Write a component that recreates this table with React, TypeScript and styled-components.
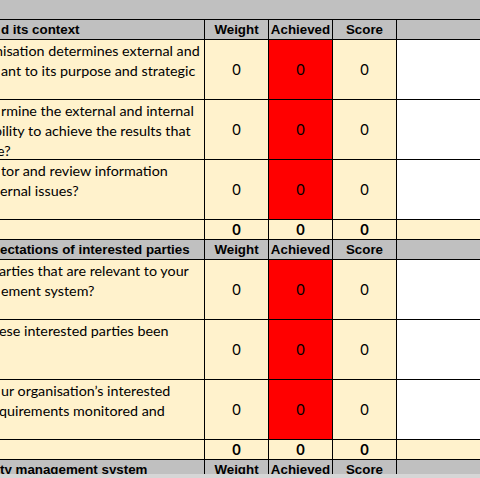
import React from "react";
import styled, { createGlobalStyle } from "styled-components";

const GlobalStyle = createGlobalStyle`
  html, body {
    margin: 0;
    padding: 0;
    background: #d6d6d6;
  }
  * { box-sizing: border-box; }
`;

const GRAY = "#c0c0c0";
const CREAM = "#fff2cc";
const RED = "#ff0000";

const Page = styled.div`
  width: 480px;
  height: 478px;
  overflow: hidden;
  display: flex;
  flex-direction: column;
  background: #d6d6d6;
`;

const Viewport = styled.div`
  height: 474px;
  overflow: hidden;
  background: #ffffff;
  flex: none;
`;

const TopBand = styled.div`
  height: 20px;
  background: ${GRAY};
  border-bottom: 1px solid #000;
`;

type Kind = "header" | "data" | "total";

const Row = styled.div<{ $kind: Kind }>`
  display: grid;
  grid-template-columns: 205px 64px 64px 64px 1fr;
  height: ${(p) => (p.$kind === "data" ? 60 : 20)}px;
  border-bottom: 1px solid #000;
`;

type Fill = "gray" | "cream" | "red" | "white";
const fillColor = (f: Fill) =>
  f === "gray" ? GRAY : f === "cream" ? CREAM : f === "red" ? RED : "#ffffff";

const Cell = styled.div<{ $fill: Fill; $last?: boolean }>`
  background: ${(p) => fillColor(p.$fill)};
  border-right: ${(p) => (p.$last ? "none" : "1px solid #000")};
  overflow: hidden;
  min-width: 0;
`;

const HeaderTitle = styled(Cell)`
  display: flex;
  align-items: center;
  padding-left: 1px;
  font-family: "Liberation Sans", Arial, sans-serif;
  font-weight: bold;
  font-size: 13.33px;
  color: #000;
  white-space: nowrap;
`;

const HeaderLabel = styled(Cell)`
  display: flex;
  align-items: center;
  justify-content: center;
  font-family: "Liberation Sans", Arial, sans-serif;
  font-weight: bold;
  font-size: 13.33px;
  color: #000;
  white-space: nowrap;
`;

const QuestionCell = styled(Cell)`
  display: flex;
  flex-direction: column;
  padding-top: 1px;
  font-family: Lato, "Open Sans", sans-serif;
  font-size: 14.3px;
  line-height: 20px;
  color: #000;
  white-space: nowrap;
`;

const Line = styled.span<{ $shift: number }>`
  display: block;
  margin-left: ${(p) => p.$shift}px;
`;

const NumCell = styled(Cell)<{ $bold?: boolean }>`
  display: flex;
  align-items: center;
  justify-content: center;
  font-family: Lato, "Open Sans", sans-serif;
  font-size: 14.67px;
  font-weight: ${(p) => (p.$bold ? 700 : 400)};
  color: #000;
`;

type Question = { lines: { text: string; shift: number }[] };
type Section = { title: string; titleShift: number; questions: Question[] };

const sections: Section[] = [
  {
    title: "d its context",
    titleShift: 0,
    questions: [
      {
        lines: [
          { text: "nisation determines external and", shift: -5 },
          { text: "ant to its purpose and strategic", shift: 1 },
        ],
      },
      {
        lines: [
          { text: "rmine the external and internal", shift: 1 },
          { text: "bility to achieve the results that", shift: -6 },
          { text: "e?", shift: -3 },
        ],
      },
      {
        lines: [
          { text: "tor and review information", shift: 1 },
          { text: "ernal issues?", shift: 0 },
        ],
      },
    ],
  },
  {
    title: "ectations of interested parties",
    titleShift: -1,
    questions: [
      {
        lines: [
          { text: "arties that are relevant to your", shift: -1 },
          { text: "ement system?", shift: 1 },
        ],
      },
      {
        lines: [{ text: "ese interested parties been", shift: -1 }],
      },
      {
        lines: [
          { text: "ur organisation\u2019s interested", shift: 1 },
          { text: "quirements monitored and", shift: -1 },
        ],
      },
    ],
  },
  {
    title: "ty management system",
    titleShift: -1,
    questions: [],
  },
];

function HeaderRow({ title, shift }: { title: string; shift: number }) {
  return (
    <Row $kind="header">
      <HeaderTitle $fill="gray">
        <Line $shift={shift}>{title}</Line>
      </HeaderTitle>
      <HeaderLabel $fill="gray">Weight</HeaderLabel>
      <HeaderLabel $fill="gray">Achieved</HeaderLabel>
      <HeaderLabel $fill="gray">Score</HeaderLabel>
      <Cell $fill="gray" $last />
    </Row>
  );
}

function QuestionRow({ q }: { q: Question }) {
  return (
    <Row $kind="data">
      <QuestionCell $fill="cream">
        {q.lines.map((l, i) => (
          <Line key={i} $shift={l.shift}>
            {l.text}
          </Line>
        ))}
      </QuestionCell>
      <NumCell $fill="cream">0</NumCell>
      <NumCell $fill="red">0</NumCell>
      <NumCell $fill="cream">0</NumCell>
      <Cell $fill="white" $last />
    </Row>
  );
}

function TotalRow() {
  return (
    <Row $kind="total">
      <Cell $fill="cream" />
      <NumCell $fill="cream" $bold>
        0
      </NumCell>
      <NumCell $fill="cream" $bold>
        0
      </NumCell>
      <NumCell $fill="cream" $bold>
        0
      </NumCell>
      <Cell $fill="cream" $last />
    </Row>
  );
}

export default function App() {
  return (
    <Page>
      <GlobalStyle />
      <Viewport>
        <TopBand />
        {sections.map((s, i) => (
          <React.Fragment key={i}>
            <HeaderRow title={s.title} shift={s.titleShift} />
            {s.questions.map((q, j) => (
              <QuestionRow key={j} q={q} />
            ))}
            {s.questions.length > 0 && <TotalRow />}
          </React.Fragment>
        ))}
      </Viewport>
    </Page>
  );
}
